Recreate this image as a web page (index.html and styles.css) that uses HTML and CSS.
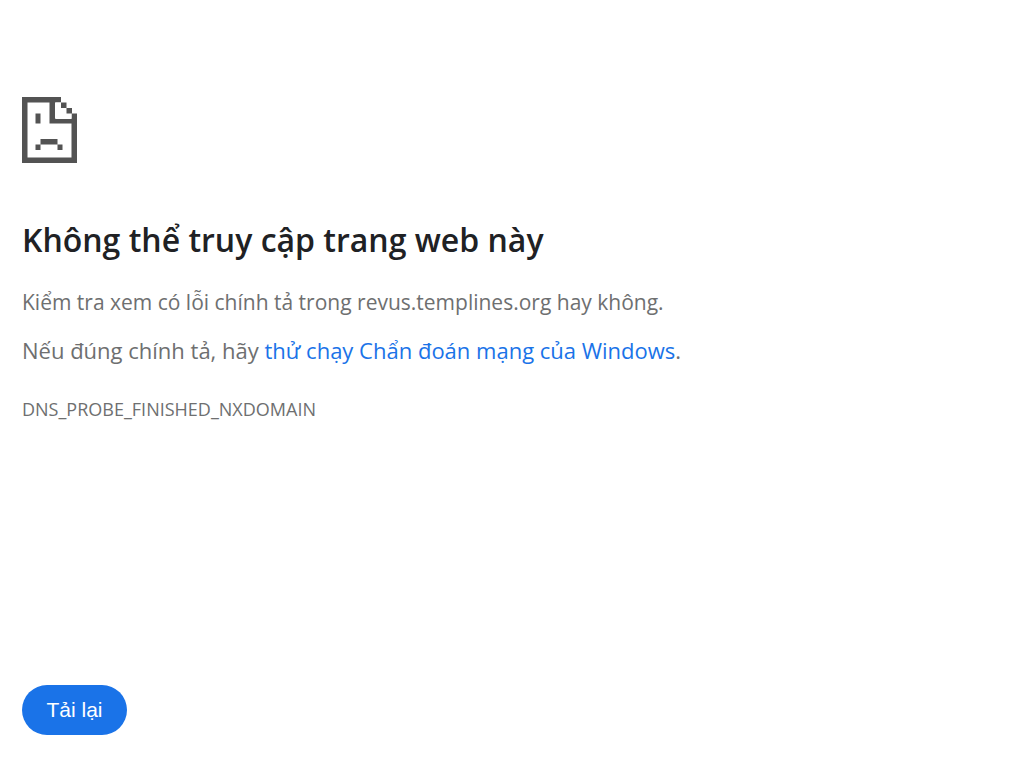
FILE: index.html
```html
<!DOCTYPE html>
<html lang="vi">
<head>
  <meta charset="UTF-8">
  <meta name="viewport" content="width=device-width, initial-scale=1">
  <title>revus.templines.org</title>
  <link rel="stylesheet" href="styles.css">
</head>
<body>

  <main class="error-page">
    <!-- Sad page -->
    <svg class="icon" viewBox="0 0 55 66" aria-hidden="true">
      <g fill="#535353">
        <path d="M0 0h39v5.500h-5.500v16.500h16v-5.500h5.500v49.500H0zM5.500 5.500v55h44v-34h-22v-21z"/>
        <path fill="#fff" d="M33 5.500h6v5.500h5.500v5.500h5v5H33z"/>
        <path d="M39 5.500h5.500v5.500H39zM44.500 11h5.500v5.500h-5.500z"/>
        <path d="M13.500 16.500h5v10h-5z"/>
        <path d="M18.500 42h17v5.500h-17zM13.500 47.500h5V53h-5zM35.500 47.500h5V53h-5z"/>
      </g>
    </svg>

    <h1>Không thể truy cập trang web này</h1>
    <p>Kiểm tra xem có lỗi chính tả trong revus.templines.org hay không.</p>
    <p class="suggestion">Nếu đúng chính tả, hãy <a href="#">thử chạy Chẩn đoán mạng của Windows</a>.</p>
    <div class="error-code">DNS_PROBE_FINISHED_NXDOMAIN</div>

    <button type="button" onclick="location.reload()">Tải lại</button>
  </main>

</body>
</html>
```

FILE: styles.css
```css
* { box-sizing: border-box; }
body {
  margin: 0;
  background-color: #fff;
  color: #6e6f70;
  font-family: 'Open Sans', 'Noto Sans', sans-serif;
  font-size: 21px;
  line-height: 32px;
}

.error-page { padding: 97px 22px 30px; }

.icon {
  display: block;
  width: 55px;
  height: 66px;
}

h1 {
  margin: 53px 0 22px;
  color: #202124;
  font-size: 32px;
  font-weight: 600;
  line-height: 48px;
}

p { margin: 0 0 16px; }
.suggestion { font-size: 22px; }

a {
  color: #1a73e8;
  text-decoration: none;
}

.error-code {
  margin-top: 28px;
  font-size: 18px;
  line-height: 30px;
}

button {
  margin-top: 261px;
  padding: 0 24px;
  min-width: 105px;
  height: 50px;
  border: none;
  border-radius: 25px;
  background-color: #1a73e8;
  color: #fff;
  font-family: 'Liberation Sans', sans-serif;
  font-size: 21px;
  cursor: pointer;
}
button:hover { background-color: #1765cc; }
```
